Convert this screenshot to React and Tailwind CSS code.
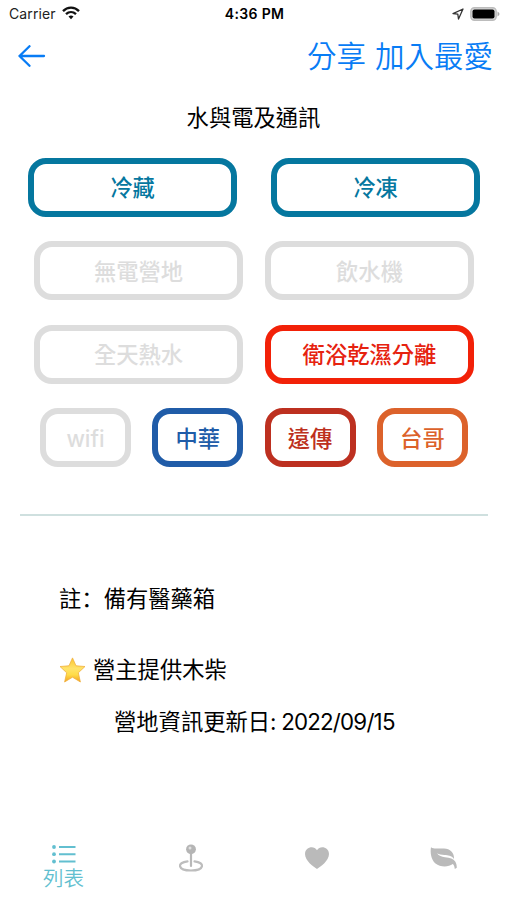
function Tag({ children, className }) {
  return (
    <button
      className={`flex h-[59px] shrink-0 items-center justify-center rounded-[18px] border-[6px] pt-[2px] text-[22.3px] leading-none tracking-normal whitespace-nowrap ${className}`}
    >
      {children}
    </button>
  );
}

function StatusBar() {
  return (
    <header className="flex h-7 items-center justify-between pl-[9px] pr-[7px] text-[14px] leading-none">
      <div className="flex w-[120px] items-center gap-[6px]">
        <span className="text-[#222] tracking-[0.1px]">Carrier</span>
        <svg width="18" height="14" viewBox="0 0 18 14" fill="none" stroke="#111" strokeWidth="2.3" className="-mt-[2px]">
          <path d="M1 5.1 C5.5 .4 12.5 .4 17 5.1" />
          <path d="M4 8.2 C7 5.3 11 5.3 14 8.2" />
          <path d="M6.5 10.5 Q9 8.4 11.5 10.5 L9 13.2Z" fill="#111" stroke="none" />
        </svg>
      </div>
      <span className="font-semibold tracking-[0.35px] text-black">4:36 PM</span>
      <div className="flex w-[120px] items-center justify-end gap-[6px]">
        <svg width="12" height="12" viewBox="0 0 12 12" fill="none" stroke="#333" strokeWidth="1.3" strokeLinejoin="round">
          <path d="M11 1 L1 5.6 L5.8 6.2 L6.5 11Z" />
        </svg>
        <svg width="30" height="14" viewBox="0 0 30 14">
          <rect x=".8" y=".8" width="25.4" height="12.4" rx="3.6" fill="#d8d8d8" stroke="#bcbcbc" strokeWidth="1.4" />
          <rect x="2.5" y="2.5" width="22" height="9" rx="2" fill="#000" />
          <path d="M27.5 4.5 Q31.5 7 27.5 9.5Z" fill="#aaa" />
        </svg>
      </div>
    </header>
  );
}

function Star() {
  return (
    <svg width="27" height="26" viewBox="0 0 27 26">
      <defs>
        <linearGradient id="star" x1="0" y1="0" x2="0" y2="1">
          <stop offset="0" stopColor="#fbc52e" />
          <stop offset=".45" stopColor="#ffe36a" />
          <stop offset=".7" stopColor="#ffdc48" />
          <stop offset="1" stopColor="#f3a01f" />
        </linearGradient>
      </defs>
      <path
        d="M13.5 .9 L17 8.8 L26 9.5 L19.3 15.8 L21.4 25 L13.5 20.2 L5.6 25 L7.7 15.8 L1 9.5 L10 8.8Z"
        fill="url(#star)"
        stroke="#f0b040"
        strokeWidth=".8"
        strokeLinejoin="round"
      />
    </svg>
  );
}

function TabBar() {
  return (
    <nav className="mt-auto flex h-[60px] items-start pr-px">
      <div className="flex w-[127px] flex-col items-center pt-[4px] text-[#62bfd0]">
        <svg width="26" height="20" viewBox="0 0 26 20" fill="currentColor">
          <circle cx="3" cy="3" r="1.9" />
          <circle cx="3" cy="10.2" r="1.9" />
          <circle cx="3" cy="17.5" r="1.9" />
          <path d="M8 2h16.500v2H8zM8 9.200h16.500v2H8zM8 16.500h16.500v2H8z" />
        </svg>
        <span className="mt-[4px] text-[20.5px] leading-[22px] font-[350]">列表</span>
      </div>
      <div className="flex w-[127px] justify-center pt-[4px]">
        <svg width="24" height="28" viewBox="0 0 24 28" fill="none">
          <path d="M8.500 17.300C-2.500 18.500-1.500 26.500 12 26.500s14.500-8 3.500-9.200" stroke="#bdbdbd" strokeWidth="2.200" strokeLinecap="round" />
          <path d="M12 9v13" stroke="#b8b8b8" strokeWidth="2.200" strokeLinecap="round" />
          <circle cx="12" cy="5.300" r="4.900" fill="#b5b5b5" />
          <circle cx="11" cy="4" r="1.500" fill="#e0e0e0" />
        </svg>
      </div>
      <div className="flex w-[126px] justify-center pt-[7px]">
        <svg width="24" height="22" viewBox="0 0 24 22" fill="#bababa">
          <path d="M12 22C9 20 0 14 0 7 0 0 9-2 12 3.200 15-2 24 0 24 7 24 14 15 20 12 22Z" />
        </svg>
      </div>
      <div className="flex w-[126px] justify-center pt-[7px] pl-px">
        <svg width="28" height="23" viewBox="0 0 28 23" fill="#bababa">
          <path d="M1 .3C4 2.500 8 1.200 14 1.500 20 1.800 24.500 5.500 24 12C21.500 8.300 18 8.200 14.500 8 11.500 7.800 9 7.300 7 6.300 9 9 11.500 9.900 15 10.200 20 10.500 23.500 11.500 25.200 14.500 26.400 16.500 26.800 18.500 26.800 20.800L24.800 22C24.500 19.500 23.800 17.800 22.800 17 18 20.500 10 20 5.500 16.500 1 13 0 5 1 .3Z" />
        </svg>
      </div>
    </nav>
  );
}

export default function App() {
  return (
    <div className='flex h-[900px] w-[507px] flex-col overflow-hidden bg-white font-["Inter","Noto_Sans_CJK_TC",sans-serif] text-black'>
      <StatusBar />
      <div className="flex h-[56px] items-center justify-between pl-[18px] pr-[14px] text-[#087cf5]">
        <svg width="28" height="22" viewBox="0 0 28 22" fill="none" stroke="currentColor" strokeWidth="2.300" strokeLinecap="round" strokeLinejoin="round">
          <path d="M11.500 1.200L1.500 11l10 9.800M1.500 11H26" />
        </svg>
        <div className="flex gap-[9px] pt-[2px] text-[29.500px] leading-none font-[350]">
          <span>分享</span>
          <span>加入最愛</span>
        </div>
      </div>

      <main className="flex flex-col">
        <h1 className="mt-[18px] h-8 text-center text-[22.300px] leading-8 font-normal">水與電及通訊</h1>
        <div className="mt-[24px] flex flex-col gap-[24.400px]">
          <div className="flex gap-[34px] pl-[28px]">
            <Tag className="w-[209px] border-[#05779f] font-medium text-[#05779f]">冷藏</Tag>
            <Tag className="w-[209px] border-[#05779f] font-medium text-[#05779f]">冷凍</Tag>
          </div>
          <div className="flex gap-[22px] pl-[34px]">
            <Tag className="w-[209px] border-[#dddddd] font-medium text-[#dddddd]">無電營地</Tag>
            <Tag className="w-[209px] border-[#dddddd] font-medium text-[#dddddd]">飲水機</Tag>
          </div>
          <div className="flex gap-[22px] pl-[34px]">
            <Tag className="w-[209px] border-[#dddddd] font-medium text-[#dddddd]">全天熱水</Tag>
            <Tag className="w-[209px] border-[#f22108] font-medium text-[#e6220f]">衛浴乾濕分離</Tag>
          </div>
          <div className="flex gap-[21.300px] pl-[40px]">
            <Tag className="w-[91px] border-[#dddddd] font-medium tracking-[-0.5px] text-[#dddddd]">wifi</Tag>
            <Tag className="w-[91px] border-[#205ca8] font-medium text-[#205ca8]">中華</Tag>
            <Tag className="w-[91px] border-[#bd3020] font-medium text-[#bd3020]">遠傳</Tag>
            <Tag className="w-[91px] border-[#dc622b] font-medium text-[#dc622b]">台哥</Tag>
          </div>
        </div>
        <hr className="mr-[19px] ml-[20px] mt-[47px] border-t-2 border-[#cfe0df]" />
        <p className="mt-[65px] ml-[59px] h-8 text-[22.300px] leading-8">
          註<span className='font-["Noto_Sans_CJK_SC",sans-serif]' lang="zh-Hans">：</span>備有醫藥箱
        </p>
        <div className="mt-[41px] ml-[59px] flex h-8 items-center gap-[7px] text-[22.300px] leading-8">
          <Star />
          <span>營主提供木柴</span>
        </div>
        <p className="mt-[20px] ml-[114px] h-8 text-[22.300px] leading-8 whitespace-nowrap">
          營地資訊更新日<span className="tracking-[-0.800px]">: 2022/09/15</span>
        </p>
      </main>
      <TabBar />
    </div>
  );
}
